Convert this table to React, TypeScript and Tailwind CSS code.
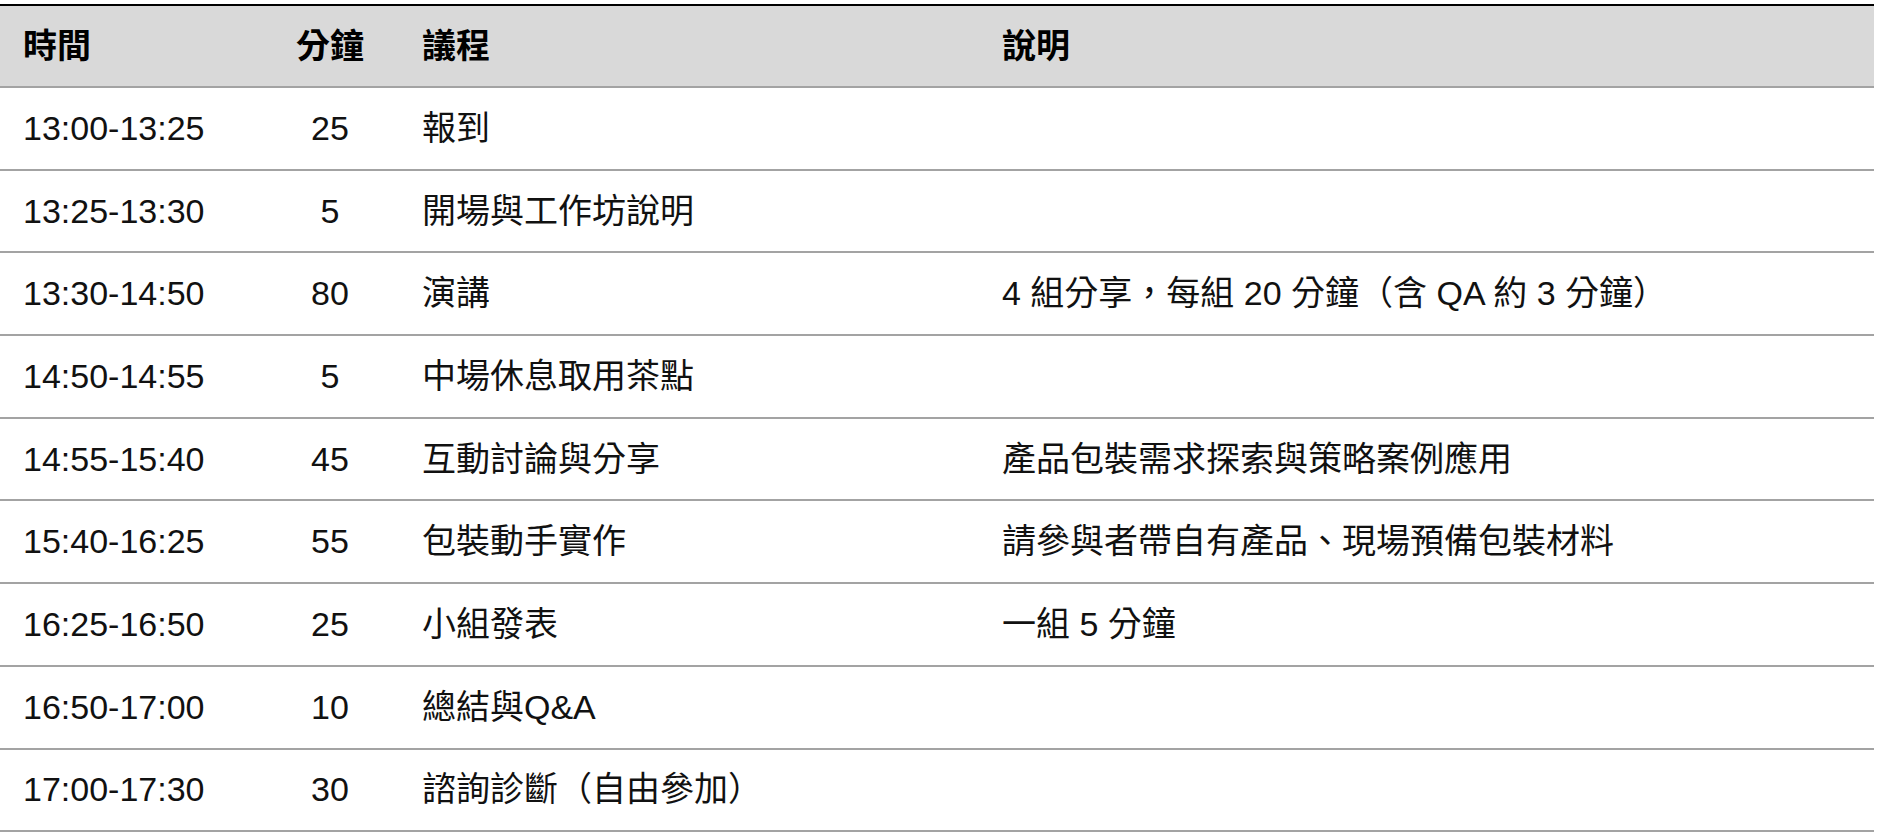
const rows = [
  { time: "13:00-13:25", min: "25", topic: "報到", note: "" },
  { time: "13:25-13:30", min: "5", topic: "開場與工作坊說明", note: "" },
  { time: "13:30-14:50", min: "80", topic: "演講", note: "4 組分享，每組 20 分鐘（含 QA 約 3 分鐘）" },
  { time: "14:50-14:55", min: "5", topic: "中場休息取用茶點", note: "" },
  { time: "14:55-15:40", min: "45", topic: "互動討論與分享", note: "產品包裝需求探索與策略案例應用" },
  { time: "15:40-16:25", min: "55", topic: "包裝動手實作", note: "請參與者帶自有產品、現場預備包裝材料" },
  { time: "16:25-16:50", min: "25", topic: "小組發表", note: "一組 5 分鐘" },
  { time: "16:50-17:00", min: "10", topic: "總結與Q&A", note: "" },
  { time: "17:00-17:30", min: "30", topic: "諮詢診斷（自由參加）", note: "" },
];

const cols = "grid grid-cols-[265px_130px_582px_1fr] items-center";

export default function App() {
  return (
    <div
      className="min-h-screen bg-white pt-[4px]"
      style={{ fontFamily: '"Liberation Sans", "Noto Sans CJK TC", sans-serif' }}
    >
      <div className="w-[1874px]">
        {/* header */}
        <div
          className={`${cols} h-[84px] bg-[#d9d9d9] border-t-[2px] border-t-black border-b-[2px] border-b-[#a3a3a3] text-[34px] font-bold text-black`}
        >
          <div className="pl-[23px]">時間</div>
          <div className="text-center">分鐘</div>
          <div className="pl-[27px]">議程</div>
          <div className="pl-[25px]">說明</div>
        </div>

        {/* rows */}
        {rows.map((r) => (
          <div
            key={r.time}
            className={`${cols} h-[82.7px] border-b-[2px] border-b-[#a3a3a3] text-[34px] text-[#111111]`}
          >
            <div className="pl-[23px] whitespace-nowrap">{r.time}</div>
            <div className="text-center">{r.min}</div>
            <div className="pl-[27px] whitespace-nowrap">{r.topic}</div>
            <div className="pl-[25px] whitespace-nowrap">{r.note}</div>
          </div>
        ))}
      </div>
    </div>
  );
}
